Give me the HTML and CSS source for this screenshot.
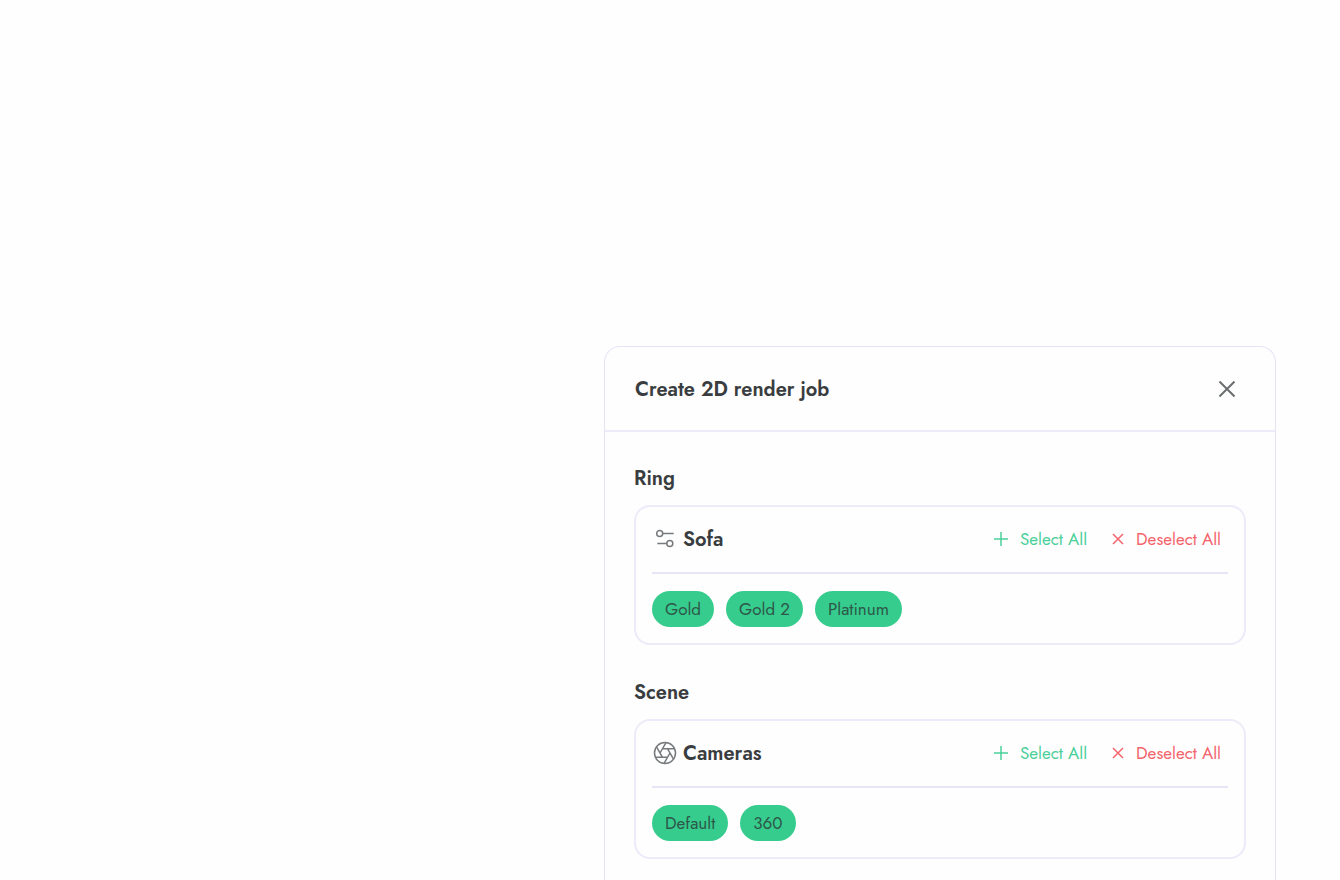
FILE: index.html
```
<!DOCTYPE html>
<html lang="en">
<head>
  <meta charset="UTF-8" />
  <meta name="viewport" content="width=device-width, initial-scale=1" />
  <title>Create 2D render job</title>
  <link rel="stylesheet" href="styles.css">
</head>
<body>
  <main class="dialog">
    <header class="dialog-header">
      <h1>Create 2D render job</h1>
      <button class="close" type="button" aria-label="Close">
        <svg width="16" height="16" viewBox="0 0 16 16"><path d="M.5 .5l15 15M15.500 .5L.5 15.500" /></svg>
      </button>
    </header>

    <div class="dialog-body">
      <section class="group">
        <h2>Ring</h2>
        <div class="box">
          <div class="box-header">
            <svg class="icon" width="24" height="24" viewBox="0 0 24 24">
              <circle cx="6.700" cy="6.500" r="3" /><path d="M9.700 6.500h11" />
              <circle cx="16.800" cy="16.500" r="3" /><path d="M4.300 16.500h9.500" />
            </svg>
            <h3>Sofa</h3>
            <button class="action select" type="button">
              <svg width="14" height="14" viewBox="0 0 14 14"><path d="M7 0v14M0 7h14" /></svg>
              Select All
            </button>
            <button class="action deselect" type="button">
              <svg width="12" height="12" viewBox="0 0 12 12"><path d="M1 1l10 10M11 1L1 11" /></svg>
              Deselect All
            </button>
          </div>
          <div class="chips">
            <button class="chip" type="button">Gold</button>
            <button class="chip" type="button">Gold 2</button>
            <button class="chip" type="button">Platinum</button>
          </div>
        </div>
      </section>

      <section class="group">
        <h2>Scene</h2>
        <div class="box">
          <div class="box-header">
            <svg class="icon" width="24" height="24" viewBox="0 0 24 24">
              <circle cx="12" cy="12" r="10.500" />
              <path d="M9.500 7.700H21.600M14.500 7.700l6 10.400M17 12l-6 10.400M14.500 16.300H2.400M9.500 16.300l-6-10.400M7 12l6-10.400" />
            </svg>
            <h3>Cameras</h3>
            <button class="action select" type="button">
              <svg width="14" height="14" viewBox="0 0 14 14"><path d="M7 0v14M0 7h14" /></svg>
              Select All
            </button>
            <button class="action deselect" type="button">
              <svg width="12" height="12" viewBox="0 0 12 12"><path d="M1 1l10 10M11 1L1 11" /></svg>
              Deselect All
            </button>
          </div>
          <div class="chips">
            <button class="chip" type="button">Default</button>
            <button class="chip" type="button">360</button>
          </div>
        </div>
      </section>
    </div>
  </main>
</body>
</html>
```
FILE: styles.css
```
* {
  box-sizing: border-box;
}
body {
  margin: 0;
  height: 100vh;
  padding: 346px 64px 0;
  display: flex;
  justify-content: flex-end;
  overflow: hidden;
  background: #fefefe;
  color: #3a3d40;
  font-family: Jost, Futura, Lato, sans-serif;
}
h1, h2, h3 {
  margin: 0;
  padding-top: 2px;
  font-size: 20px;
  font-weight: 600;
  line-height: 24px;
}
button {
  border: none;
  background: none;
  padding: 0;
  color: inherit;
  font-family: inherit;
  cursor: pointer;
}
svg {
  display: block;
  fill: none;
  stroke: currentColor;
}
.dialog {
  width: calc(50vw + 2px);
  border: 1px solid #e4e4f6;
  border-bottom: none;
  border-radius: 16px 16px 0 0;
}
.dialog-header {
  display: flex;
  align-items: center;
  justify-content: space-between;
  padding: 24px 30px 23px;
  border-bottom: 2px solid #ebebfa;
}
.close {
  padding: 10px;
  color: #6a6e70;
}
.close svg {
  stroke-width: 2;
}
.dialog-body {
  display: flex;
  flex-direction: column;
  gap: 34px;
  padding: 33px 29px;
}
.group {
  display: flex;
  flex-direction: column;
  gap: 14px;
}
.box {
  border: 2px solid #ebebfa;
  border-radius: 16px;
  padding: 0 16px 16px;
}
.box-header {
  display: flex;
  align-items: center;
  padding: 19px 7px 20px 1px;
  border-bottom: 2px solid #e6e6f6;
}
.box-header h3 {
  flex: 1;
  margin-left: 6px;
}
.icon {
  color: #777a7c;
  stroke-width: 1.5;
}
.action {
  display: flex;
  align-items: center;
  gap: 12px;
  font-size: 17px;
  line-height: 24px;
}
.select {
  color: #4bd09a;
}
.select svg, .deselect svg {
  stroke-width: 1.5;
}
.deselect {
  margin-left: 25px;
  color: #f4646c;
}
.chips {
  display: flex;
  flex-wrap: wrap;
  gap: 12px;
  padding-top: 17px;
}
.chip {
  height: 36px;
  padding: 0 13px;
  border-radius: 18px;
  background: #36cc8e;
  color: #2d5748;
  font-size: 17px;
}
```
